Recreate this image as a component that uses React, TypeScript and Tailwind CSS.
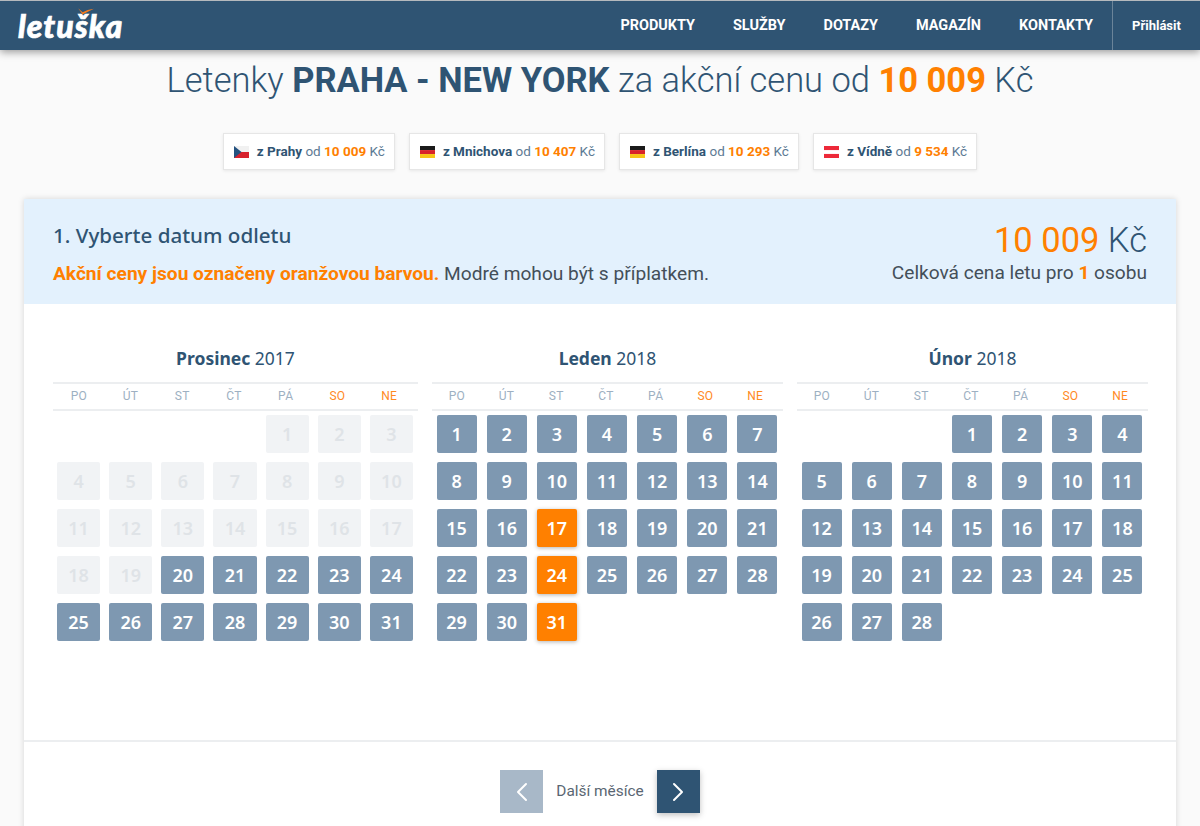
import { ChevronLeft, ChevronRight } from "lucide-react";

const NAV = ["PRODUKTY", "SLUŽBY", "DOTAZY", "MAGAZÍN", "KONTAKTY"];
const DAYS = ["PO", "ÚT", "ST", "ČT", "PÁ", "SO", "NE"];

function Flag({ code }: { code: string }) {
  if (code === "cz")
    return (
      <svg width="15" height="12" viewBox="0 0 16 13" preserveAspectRatio="none" className="shrink-0">
        <rect width="16" height="6.5" fill="#f1f1f1" />
        <rect y="6.5" width="16" height="6.5" fill="#d7222e" />
        <path d="M0 0 L8 6.5 L0 13 Z" fill="#24527f" />
      </svg>
    );
  if (code === "de")
    return (
      <svg width="15" height="12" viewBox="0 0 16 13" preserveAspectRatio="none" className="shrink-0">
        <rect width="16" height="4.4" fill="#1a1a1a" />
        <rect y="4.4" width="16" height="4.3" fill="#d8232a" />
        <rect y="8.7" width="16" height="4.3" fill="#f7c518" />
      </svg>
    );
  return (
    <svg width="15" height="12" viewBox="0 0 16 13" preserveAspectRatio="none" className="shrink-0">
      <rect width="16" height="13" fill="#ed2939" />
      <rect y="4.4" width="16" height="4.2" fill="#ffffff" />
    </svg>
  );
}

function Chip({ flag, city, price }: { flag: string; city: string; price: string }) {
  return (
    <div className="flex h-[37px] items-center gap-[8px] border border-[#e6e6e6] bg-white pl-[10px] pr-[9px] text-[13.5px] text-[#5d7a94] shadow-[0_1px_3px_rgba(0,0,0,0.08)]">
      <Flag code={flag} />
      <span className="whitespace-nowrap">
        <b className="font-bold text-[#2f5473]">{city}</b> od <b className="font-bold text-[#ff8000]">{price}</b> Kč
      </span>
    </div>
  );
}

// offset = empty cells before day 1; disabled = days that can't be picked
function Month({
  name,
  year,
  days,
  offset,
  disabled = 0,
  orange = [],
  wide = false,
}: {
  name: string;
  year: string;
  days: number;
  offset: number;
  disabled?: number;
  orange?: number[];
  wide?: boolean;
}) {
  return (
    <div className={wide ? "w-[365px]" : "w-[351px]"}>
      <div className="h-[49px] pt-[13px] text-center font-['Noto_Sans',sans-serif] text-[17.5px] leading-[24px] text-[#2f5473]">
        <b className="font-bold">{name}</b> {year}
      </div>
      <div className="grid h-[29px] grid-cols-7 items-center border-y-2 border-[#eceef0] pb-[2px] pr-[3px] text-center text-[12px] tracking-[0.3px] text-[#9db0c2]">
        {DAYS.map((d, i) => (
          <span key={d} className={i > 4 ? "text-[#ff8a1f]" : ""}>
            {d}
          </span>
        ))}
      </div>
      <div className="mt-[4px] grid grid-cols-7 gap-y-[9px]">
        {Array.from({ length: offset }).map((_, i) => (
          <div key={i} />
        ))}
        {Array.from({ length: days }).map((_, i) => {
          const day = i + 1;
          let color = "bg-[#7e98b1] text-white";
          if (day <= disabled) color = "bg-[#f1f3f5] text-[#dfe3e7]";
          if (orange.includes(day)) color = "bg-[#ff8000] text-white shadow-[0_1px_4px_rgba(0,0,0,0.3)]";
          return (
            <div
              key={day}
              className={`flex h-[38px] items-center justify-center rounded-[2px] font-['Noto_Sans',sans-serif] text-[18px] font-semibold ${wide ? "ml-[4px] mr-[5px]" : "ml-[4.5px] mr-[5.5px]"} ${color}`}
            >
              {day}
            </div>
          );
        })}
      </div>
    </div>
  );
}

export default function App() {
  return (
    <div className="h-[826px] overflow-hidden bg-[#fafafa] font-['Roboto',sans-serif]">
      <header className="relative z-10 flex h-[50px] items-center justify-between border-t border-[#b5b9bd] bg-[#2f5473] shadow-[0_2px_8px_rgba(0,0,0,0.4)]">
        <div className="relative ml-[18px] font-['Lato',sans-serif] text-[32px] font-black italic leading-none tracking-[1px] text-white [-webkit-text-stroke:0.7px_white]">
          letuška
          <svg width="18" height="8" viewBox="0 0 16 7" className="absolute left-[59px] top-[-3px]">
            <path d="M1 1 L5 4.5 Q9 2 15 1.5 Q10 4 5 6.5 Z" fill="#f47b20" />
          </svg>
        </div>
        <nav className="flex h-full items-center text-[14.45px] font-bold text-white">
          <div className="flex gap-[38px] pr-[19px]">
            {NAV.map((n) => (
              <span key={n}>{n}</span>
            ))}
          </div>
          <div className="flex h-full w-[88px] items-center justify-center border-l border-[#6b8499] text-[13px]">
            Přihlásit
          </div>
        </nav>
      </header>

      <h1 className="mt-[8px] text-center text-[34.5px] font-light leading-[44px] text-[#2f5473]">
        Letenky <b className="font-bold">PRAHA - NEW YORK</b> za akční cenu od{" "}
        <b className="font-bold text-[#ff8000]">10 009</b> Kč
      </h1>

      <div className="mt-[31px] flex justify-center gap-[14px]">
        <Chip flag="cz" city="z Prahy" price="10 009" />
        <Chip flag="de" city="z Mnichova" price="10 407" />
        <Chip flag="de" city="z Berlína" price="10 293" />
        <Chip flag="at" city="z Vídně" price="9 534" />
      </div>

      <main className="mx-[24px] mt-[29px] bg-white pb-[30px] shadow-[0_0_6px_rgba(0,0,0,0.15)]">
        <div className="flex h-[105px] items-start justify-between bg-[#e3f1fd] px-[29px]">
          <div>
            <h2 className="mt-[22px] font-['Noto_Sans',sans-serif] text-[20.6px] font-medium leading-[28px] text-[#2f5473]">
              1. Vyberte datum odletu
            </h2>
            <p className="mt-[13px] text-[19.15px] leading-[24px] text-[#444f59]">
              <b className="font-bold text-[#ff8000]">Akční ceny jsou označeny oranžovou barvou.</b> Modré mohou být s
              příplatkem.
            </p>
          </div>
          <div className="text-right">
            <div className="mt-[19px] text-[34.5px] font-light leading-[44px] text-[#2f5473]">
              <span className="font-normal text-[#ff8000]">10 009</span> Kč
            </div>
            <p className="mt-[-1px] text-[19.1px] leading-[24px] text-[#444f59]">
              Celková cena letu pro <b className="font-bold text-[#ff8000]">1</b> osobu
            </p>
          </div>
        </div>

        <div className="flex h-[438px] justify-between border-b-2 border-[#eceef0] pl-[29px] pr-[28px] pt-[29px]">
          <Month name="Prosinec" year="2017" days={31} offset={4} disabled={19} wide />
          <Month name="Leden" year="2018" days={31} offset={0} orange={[17, 24, 31]} />
          <Month name="Únor" year="2018" days={28} offset={3} />
        </div>

        <div className="flex items-center justify-center pt-[28px]">
          <button className="flex h-[43px] w-[43px] items-center justify-center bg-[#a8b8c8] text-white">
            <ChevronLeft size={32} strokeWidth={1.5} />
          </button>
          <span className="mx-[13px] text-[15.4px] text-[#5a6672]">Další měsíce</span>
          <button className="flex h-[43px] w-[43px] items-center justify-center bg-[#2f5473] text-white shadow-[0_2px_6px_rgba(0,0,0,0.25)]">
            <ChevronRight size={32} strokeWidth={1.5} />
          </button>
        </div>
      </main>
    </div>
  );
}
